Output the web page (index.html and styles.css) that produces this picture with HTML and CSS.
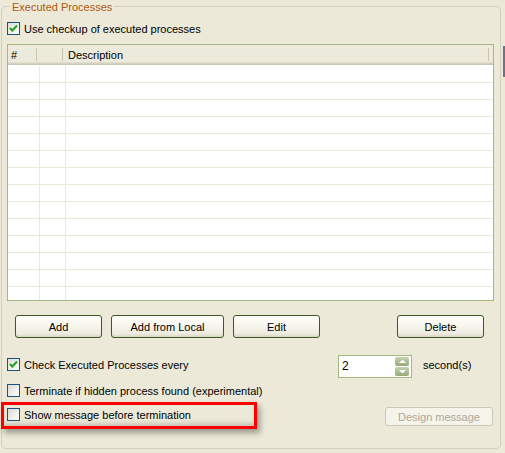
FILE: index.html
```html
<!DOCTYPE html>
<html lang="en">
<head>
    <meta charset="UTF-8">
    <title>Executed Processes</title>
    <link rel="stylesheet" href="styles.css">
</head>
<body>
    <div class="window">
        <div class="group">
            <div class="group-title">Executed Processes</div>

            <div class="check-row first-row">
                <span class="box"><svg width="11" height="11" viewBox="0 0 11 11"><path d="M2 5 L4.3 7.5 L9 2.5" fill="none" stroke="#21A121" stroke-width="2"/></svg></span>
                <span>Use checkup of executed processes</span>
            </div>

            <div class="list">
                <div class="list-head">
                    <div class="hcell c1">#</div>
                    <div class="hcell c2"></div>
                    <div class="hcell c3">Description</div>
                </div>
                <div class="list-body" id="list-body"></div>
            </div>

            <div class="buttons">
                <button class="btn w87">Add</button>
                <button class="btn w113">Add from Local</button>
                <button class="btn w87">Edit</button>
                <button class="btn w87 right">Delete</button>
            </div>

            <div class="option-row every-row">
                <div class="check-row label-wide">
                    <span class="box"><svg width="11" height="11" viewBox="0 0 11 11"><path d="M2 5 L4.3 7.5 L9 2.5" fill="none" stroke="#21A121" stroke-width="2"/></svg></span>
                    <span>Check Executed Processes every</span>
                </div>
                <div class="spin">
                    <span class="spin-value">2</span>
                    <div class="spin-btns">
                        <span class="spin-btn"><svg width="9" height="5" viewBox="0 0 9 5"><path d="M4.5 0.5 L8 4 L1 4 Z" fill="#fff"/></svg></span>
                        <span class="spin-btn"><svg width="9" height="5" viewBox="0 0 9 5"><path d="M1 1 L8 1 L4.5 4.5 Z" fill="#fff"/></svg></span>
                    </div>
                </div>
                <span class="unit">second(s)</span>
            </div>

            <div class="check-row terminate-row">
                <span class="box"></span>
                <span>Terminate if hidden process found (experimental)</span>
            </div>

            <div class="option-row message-row">
                <div class="check-row label-message">
                    <span class="box"></span>
                    <span>Show message before termination</span>
                </div>
                <button class="btn-disabled" disabled>Design message</button>
            </div>

            <div class="highlight"></div>
        </div>
        <div class="scroll-edge"><div class="thumb"></div></div>
    </div>

    <script>
        const body = document.getElementById('list-body');
        for (let i = 0; i < 14; i++) {
            body.innerHTML += '<div class="row"><div class="cell c1"></div><div class="cell c2"></div><div class="cell c3"></div></div>';
        }
    </script>
</body>
</html>
```

FILE: styles.css
```css
body {
    margin: 0;
    background-color: #ECE9D8;
    font-family: 'Liberation Sans', Arial, sans-serif;
    font-size: 11px;
    color: #000;
}
.window {
    display: flex;
    width: 505px;
    height: 453px;
    overflow: hidden;
}
.group {
    position: relative;
    box-sizing: border-box;
    width: 500px;
    height: 443px;
    margin: 6px 0 0 1px;
    border: 1px solid #D0D0BF;
    border-radius: 5px;
}
.group-title {
    width: max-content;
    margin: -6px 0 0 8px;
    padding: 0 2px;
    height: 13px;
    line-height: 13px;
    background-color: #ECE9D8;
    color: #B0590F;
}
.check-row {
    display: flex;
    align-items: center;
    gap: 4px;
    height: 13px;
    padding-left: 5px;
    white-space: nowrap;
}
.box {
    box-sizing: border-box;
    width: 13px;
    height: 13px;
    flex: 0 0 13px;
    border: 1px solid #1C5180;
    background: linear-gradient(135deg, #DCDCD7 0%, #F4F4F0 70%, #FFFFFF 100%);
}
.box svg {
    display: block;
}
.first-row {
    margin-top: 8px;
}

/* list view */
.list {
    box-sizing: border-box;
    width: 487px;
    height: 257px;
    margin: 9px 0 0 5px;
    border: 1px solid #A5B97E;
    background-color: #fff;
    overflow: hidden;
}
.list-head {
    display: flex;
    height: 20px;
    background: linear-gradient(to bottom, #EBEADB 0, #EBEADB 17px, #E2DECD 17px, #E2DECD 18px, #D6D2C2 18px, #D6D2C2 19px, #CBC7B8 19px);
}
.hcell {
    box-sizing: border-box;
    height: 17px;
    line-height: 17px;
    padding: 2px 0 0 3px;
    background: linear-gradient(#C7C5B2, #C7C5B2) right 3px top 3px / 1px 13px no-repeat;
}
.c1 { width: 32px; }
.c2 { width: 26px; }
.c3 { width: 426px; }
.hcell.c3 { padding-left: 2px; }
.list-body {
    padding-top: 1px;
}
.row {
    display: flex;
    height: 17px;
    box-sizing: border-box;
    border-bottom: 1px solid #EBE8D6;
}
.cell {
    box-sizing: border-box;
    height: 16px;
}
.cell.c1, .cell.c2 {
    border-right: 1px solid #EBE8D6;
}

/* buttons */
.buttons {
    display: flex;
    gap: 9px;
    margin: 14px 16px 0 13px;
}
.btn {
    box-sizing: border-box;
    height: 23px;
    padding: 0;
    font-family: inherit;
    font-size: 11px;
    color: #000;
    border: 1px solid #3B5A23;
    border-radius: 3px;
    background: linear-gradient(to bottom, #FFFFFB 0%, #F7F6EE 45%, #EDEBDF 85%, #D9D5C2 100%);
}
.w87 { width: 87px; }
.w113 { width: 113px; }
.btn.right { margin-left: auto; }

/* options */
.option-row {
    display: flex;
    align-items: flex-start;
}
.every-row {
    margin-top: 17px;
    height: 23px;
}
.label-wide {
    width: 331px;
    margin-top: 3px;
}
.spin {
    box-sizing: border-box;
    display: flex;
    justify-content: space-between;
    width: 74px;
    height: 23px;
    border: 1px solid #A5B97E;
    background-color: #fff;
}
.spin-value {
    line-height: 20px;
    padding-left: 3px;
    font-size: 12px;
}
.spin-btns {
    display: flex;
    flex-direction: column;
    gap: 1px;
    padding: 1px 2px 1px 0;
}
.spin-btn {
    display: flex;
    align-items: center;
    justify-content: center;
    width: 14px;
    height: 9px;
    border-radius: 2px;
    background: linear-gradient(to bottom, #C6D2B0, #95AA7A);
}
.unit {
    margin-left: 11px;
    line-height: 20px;
}
.terminate-row {
    margin-top: 6px;
}
.message-row {
    margin-top: 10px;
    height: 19px;
}
.label-message {
    width: 378px;
    margin-top: 1px;
}
.btn-disabled {
    box-sizing: border-box;
    width: 108px;
    height: 19px;
    padding: 0;
    font-family: inherit;
    font-size: 11px;
    color: #ACA899;
    border: 1px solid #CAC8BB;
    border-radius: 3px;
    background-color: #F5F4EA;
}

/* red annotation box over the last option */
.highlight {
    position: absolute;
    left: -1px;
    top: 395px;
    box-sizing: border-box;
    width: 256px;
    height: 27px;
    border: 3px solid #FF0000;
    box-shadow: 3px 4px 6px rgba(0, 0, 0, 0.35), inset 0 -4px 5px -2px rgba(0, 0, 0, 0.2);
}

.scroll-edge {
    flex: 0 0 4px;
}
.thumb {
    width: 2px;
    height: 31px;
    margin: 46px 0 0 2px;
    background-color: #6E6F8D;
}
```
